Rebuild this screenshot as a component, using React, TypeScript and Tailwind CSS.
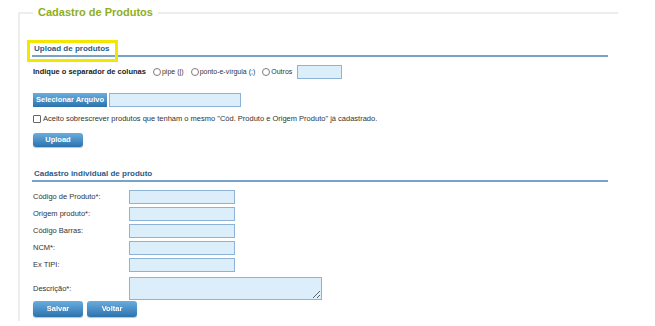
import React from "react";

const font = { fontFamily: '"Liberation Sans", Arial, sans-serif' };

const Btn = ({ label, className }: { label: string; className: string }) => (
  <button
    className={`flex items-center justify-center rounded-[3px] bg-gradient-to-b from-[#6aaedf] to-[#2b72ad] text-[7.5px] font-bold text-white shadow-[0_1px_1px_rgba(0,0,0,0.25)] ${className}`}
  >
    {label}
  </button>
);

const Radio = ({ label }: { label: string }) => (
  <label className="flex items-center">
    <span className="w-[8px] h-[8px] rounded-full border border-[#7d7d7d] bg-white" />
    <span className="ml-[1px] text-[7px] text-[#333]">{label}</span>
  </label>
);

const fields = ["Código de Produto*:", "Origem produto*:", "Código Barras:", "NCM*:", "Ex TIPI:"];

const App = () => {
  return (
    <div className="relative w-[655px] h-[326px] bg-white overflow-hidden text-[#222]" style={font}>
      {/* moldura principal */}
      <div className="relative ml-[18px] mt-[12px] w-[600px] h-[309px] border-t-2 border-l-2 border-[#eceeec] pl-[12px]">
        <div className="absolute -top-[10px] left-[13px] bg-white px-[5px] text-[11px] leading-[16px] font-bold text-[#8fae1b]">
          Cadastro de Produtos
        </div>

        {/* Upload */}
        <div className="mt-[29px] w-[576px] h-[14px] pl-[2px] border-b-2 border-[#76a3ca] text-[8px] leading-[12px] font-bold text-[#2c5b85]">
          Upload de produtos
        </div>

        <div className="ml-[1px] mt-[8px] h-[14px] flex items-center">
          <span className="text-[7.5px] font-bold text-[#222]">Indique o separador de colunas</span>
          <div className="ml-[7px] flex items-center gap-[7px]">
            <Radio label="pipe (|)" />
            <Radio label="ponto-e-vírgula (;)" />
            <Radio label="Outros" />
          </div>
          <input className="ml-[5px] w-[45px] h-[14px] bg-[#ddeefb] border border-[#8db3d6] outline-none" />
        </div>

        <div className="ml-[1px] mt-[14px] h-[14px] flex items-center gap-[2px]">
          <button className="w-[74px] h-[14px] bg-gradient-to-b from-[#6aaedf] to-[#2b72ad] text-[7.5px] font-bold text-white">
            Selecionar Arquivo
          </button>
          <input className="w-[132px] h-[14px] bg-[#ddeefb] border border-[#8db3d6] outline-none" />
        </div>

        <div className="ml-[1px] mt-[7px] h-[10px] flex items-center">
          <span className="w-[8px] h-[8px] rounded-[1px] border border-[#666] bg-white" />
          <span className="ml-[2px] text-[7.5px] text-[#333]">
            Aceito sobrescrever produtos que tenham o mesmo "Cód. Produto e Origem Produto" já cadastrado.
          </span>
        </div>

        <Btn label="Upload" className="ml-[1px] mt-[9px] w-[50px] h-[14px]" />

        {/* Cadastro individual */}
        <div className="mt-[21px] w-[576px] h-[14px] pl-[2px] border-b-2 border-[#76a3ca] text-[8px] leading-[12px] font-bold text-[#2c5b85]">
          Cadastro individual de produto
        </div>

        <div className="ml-[1px] mt-[8px] flex flex-col gap-[3px]">
          {fields.map((f) => (
            <div key={f} className="h-[14px] flex items-center">
              <span className="w-[96px] text-[7.5px] text-[#333]">{f}</span>
              <input className="w-[106px] h-[14px] bg-[#ddeefb] border border-[#8db3d6] outline-none" />
            </div>
          ))}
        </div>

        <div className="ml-[1px] mt-[5px] h-[23px] flex items-center">
          <span className="w-[96px] text-[7.5px] text-[#333]">Descrição*:</span>
          <textarea className="block w-[193px] h-[23px] bg-[#ddeefb] border border-[#8db3d6] outline-none" />
        </div>

        <div className="ml-[1px] mt-[1px] flex gap-[4px]">
          <Btn label="Salvar" className="w-[50px] h-[16px]" />
          <Btn label="Voltar" className="w-[50px] h-[16px]" />
        </div>
      </div>

      {/* destaque */}
      <div className="absolute left-[27px] top-[40px] w-[91px] h-[22px] border-[3px] border-[#f4e600]" />
    </div>
  );
};

export default App;
